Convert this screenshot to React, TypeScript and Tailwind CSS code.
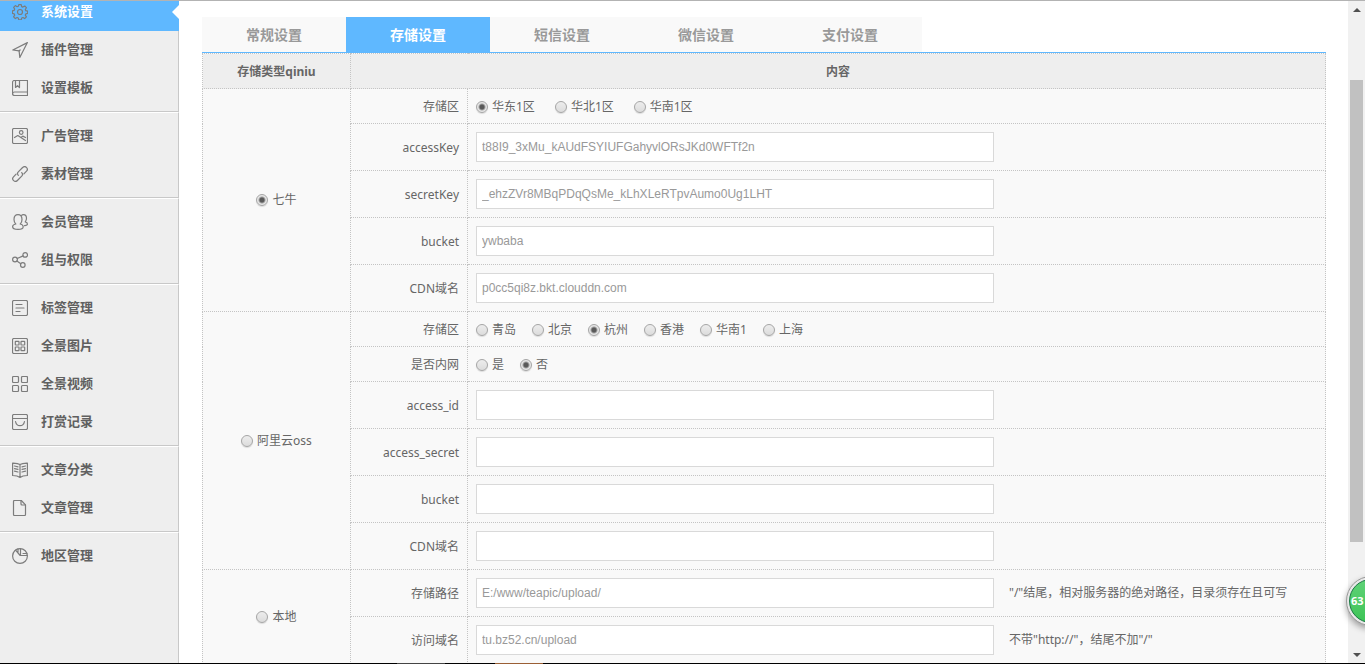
import type { ReactNode } from "react";
import clsx from "clsx";

type IconProps = { children: ReactNode };

function Icon({ children }: IconProps) {
  return (
    <svg
      viewBox="0 0 16 16"
      className="h-4 w-4 shrink-0"
      fill="none"
      stroke="#7c7c7c"
      strokeWidth="1.2"
      strokeLinejoin="round"
      strokeLinecap="round"
      aria-hidden="true"
    >
      {children}
    </svg>
  );
}

const icons = {
  gear: (
    <Icon>
      <path d="M6.8.6h2.4l.5 2 1.200.5 1.800-1.100 1.700 1.700-1.100 1.800.5 1.200 1.900.5v2.200l-1.900.5-.5 1.200 1.100 1.800-1.700 1.700-1.800-1.100-1.200.5-.5 1.800H6.800l-.5-1.800-1.200-.5-1.800 1.100-1.700-1.700 1.100-1.800-.5-1.200-1.800-.5V6.800l1.800-.5.5-1.200-1.100-1.800 1.700-1.700 1.800 1.100 1.200-.5z" />
      <circle cx="8" cy="8" r="2.500" />
    </Icon>
  ),
  plane: (
    <Icon>
      <path d="M15.400.6.8 8l6.300.9.7 6.500z" />
      <path d="m7.100 8.900 1-.9" />
    </Icon>
  ),
  book: (
    <Icon>
      <path d="M15.500.5H2.500c-1.200 0-2 .8-2 2v11c0 1.200.8 2 2 2h13z" />
      <path d="M.6 13.500c.1-1 .9-1.500 1.900-1.500h13M3.500.7v6.800l2-1.800 2 1.800V.7" />
    </Icon>
  ),
  image: (
    <Icon>
      <rect x=".5" y=".5" width="15" height="15" rx="1.500" />
      <circle cx="9.200" cy="4.500" r="1.800" />
      <path d="m2.500 9.500 3.300-2 7.700 5M9.300 9.300l1.500-1.200 2.700 1.400" />
    </Icon>
  ),
  link: (
    <Icon>
      <path d="M6.300 9.300c-1-1-1-2.400 0-3.400l4.300-4.400c1.100-1.100 2.700-1.100 3.800-.1 1.200 1.100 1.100 2.700.1 3.800l-2.600 2.700" />
      <path d="M9.700 6.700c1 1 1 2.400 0 3.400l-4.300 4.400c-1.100 1.100-2.700 1.100-3.800.1-1.200-1.100-1.100-2.700-.1-3.800l2.600-2.700" />
    </Icon>
  ),
  users: (
    <Icon>
      <path d="M3.800 10C2.600 9 2 7.500 2 5.500 2 2.500 3.600.6 6 .6s4 1.900 4 4.900c0 2-.6 3.500-1.800 4.500 1.800.4 3 1.200 3 2.700 0 1.900-2.200 2.700-5.200 2.700S.6 14.600.6 12.700C.6 11.200 2 10.300 3.800 10z" />
      <path d="M9.500 1.300c.5-.5 1.200-.7 1.900-.7 1.900 0 3.100 1.500 3.100 3.700 0 1.500-.5 2.700-1.300 3.500 1.400.3 2.200 1 2.200 2.200 0 1-.9 1.500-2.900 1.600" />
    </Icon>
  ),
  share: (
    <Icon>
      <circle cx="3" cy="7.500" r="2.400" />
      <circle cx="13.200" cy="2.900" r="2.300" />
      <circle cx="10.800" cy="13" r="2.300" />
      <path d="m5.200 6.500 5.900-2.600M4.900 9l3.900 2.700" />
    </Icon>
  ),
  note: (
    <Icon>
      <rect x=".5" y=".5" width="15" height="15" rx="1.500" />
      <path d="M4 4.500h6M4 8h8M4 11.500h4" />
    </Icon>
  ),
  gridBox: (
    <Icon>
      <rect x=".5" y=".5" width="15" height="15" rx="1.500" />
      <rect x="3.300" y="3.300" width="3.700" height="3.700" rx=".5" />
      <rect x="9" y="3.300" width="3.700" height="3.700" rx=".5" />
      <rect x="3.300" y="9" width="3.700" height="3.700" rx=".5" />
      <rect x="9" y="9" width="3.700" height="3.700" rx=".5" />
    </Icon>
  ),
  grid: (
    <Icon>
      <rect x=".5" y=".5" width="6" height="6" rx="1" />
      <rect x="9.500" y=".5" width="6" height="6" rx="1" />
      <rect x=".5" y="9.500" width="6" height="6" rx="1" />
      <rect x="9.500" y="9.500" width="6" height="6" rx="1" />
    </Icon>
  ),
  pocket: (
    <Icon>
      <rect x=".5" y=".5" width="15" height="15" rx="1.500" />
      <path d="M.5 4.500h15M3.500 7.500c.5 2.700 2.200 4.200 4.500 4.200s4-1.500 4.500-4.200" />
    </Icon>
  ),
  openBook: (
    <Icon>
      <path d="M8 2.500C6 1.300 3.500 1.200.6 1v12.500c3 .1 5.400.4 7.400 1.900 2-1.500 4.400-1.800 7.400-1.900V1c-2.900.2-5.400.3-7.400 1.500zM8 2.500v12.900" />
      <path d="m2.500 4 3.500.8M2.500 6.600l3.500.8M2.500 9.200l3.500.8M13.500 4l-3.500.8M13.500 6.600l-3.500.8M13.500 9.200l-3.500.8" />
    </Icon>
  ),
  file: (
    <Icon>
      <path d="M9.300.5H2.500c-.6 0-1 .4-1 1v13c0 .6.4 1 1 1h10c.6 0 1-.4 1-1V4.900z" />
      <path d="M9 .7V4c0 .7.300 1 1 1h3.300" />
    </Icon>
  ),
  pie: (
    <Icon>
      <circle cx="8" cy="8" r="7.400" />
      <path d="M15.300 7.500H8.200L3.500 2.200M6 .9v4M8.500.6v6.700M11 5.500h3.900" />
    </Icon>
  ),
};

type IconName = keyof typeof icons;

const menuGroups: { label: string; icon: IconName; active?: boolean }[][] = [
  [
    { label: "系统设置", icon: "gear", active: true },
    { label: "插件管理", icon: "plane" },
    { label: "设置模板", icon: "book" },
  ],
  [
    { label: "广告管理", icon: "image" },
    { label: "素材管理", icon: "link" },
  ],
  [
    { label: "会员管理", icon: "users" },
    { label: "组与权限", icon: "share" },
  ],
  [
    { label: "标签管理", icon: "note" },
    { label: "全景图片", icon: "gridBox" },
    { label: "全景视频", icon: "grid" },
    { label: "打赏记录", icon: "pocket" },
  ],
  [
    { label: "文章分类", icon: "openBook" },
    { label: "文章管理", icon: "file" },
  ],
  [{ label: "地区管理", icon: "pie" }],
];

const tabs = ["常规设置", "存储设置", "短信设置", "微信设置", "支付设置"];

type Field = {
  label: string;
  name: string;
  value?: string;
  hint?: string;
  options?: string[];
  checked?: string;
};

const storages: { id: string; label: string; fields: Field[] }[] = [
  {
    id: "qiniu",
    label: "七牛",
    fields: [
      { label: "存储区", name: "zone", options: ["华东1区", "华北1区", "华南1区"], checked: "华东1区" },
      { label: "accessKey", name: "accessKey", value: "t88I9_3xMu_kAUdFSYIUFGahyvlORsJKd0WFTf2n" },
      { label: "secretKey", name: "secretKey", value: "_ehzZVr8MBqPDqQsMe_kLhXLeRTpvAumo0Ug1LHT" },
      { label: "bucket", name: "bucket", value: "ywbaba" },
      { label: "CDN域名", name: "cdn", value: "p0cc5qi8z.bkt.clouddn.com" },
    ],
  },
  {
    id: "oss",
    label: "阿里云oss",
    fields: [
      { label: "存储区", name: "zone", options: ["青岛", "北京", "杭州", "香港", "华南1", "上海"], checked: "杭州" },
      { label: "是否内网", name: "internal", options: ["是", "否"], checked: "否" },
      { label: "access_id", name: "access_id", value: "" },
      { label: "access_secret", name: "access_secret", value: "" },
      { label: "bucket", name: "bucket", value: "" },
      { label: "CDN域名", name: "cdn", value: "" },
    ],
  },
  {
    id: "local",
    label: "本地",
    fields: [
      {
        label: "存储路径",
        name: "path",
        value: "E:/www/teapic/upload/",
        hint: "\"/\"结尾，相对服务器的绝对路径，目录须存在且可写",
      },
      { label: "访问域名", name: "domain", value: "tu.bz52.cn/upload", hint: "不带\"http://\"，结尾不加\"/\"" },
    ],
  },
];

function Radio({ label, name, checked }: { label: string; name: string; checked?: boolean }) {
  return (
    <label className="inline-flex items-center gap-1 whitespace-nowrap">
      <input
        type="radio"
        name={name}
        defaultChecked={checked}
        className="h-3 w-3 shrink-0 appearance-none rounded-full border border-[#a6a6a6] bg-linear-to-b from-[#ededed] to-[#dcdcdc] shadow-[0_1px_1px_rgba(0,0,0,0.12)] checked:bg-[radial-gradient(circle,#5a5a5a_0,#5a5a5a_2px,#e6e6e6_4px)]"
      />
      {label}
    </label>
  );
}

function FieldControl({ field, id }: { field: Field; id: string }) {
  if (field.options) {
    return (
      <div
        role="radiogroup"
        aria-label={field.label}
        className={clsx("flex pt-0.5", field.options.length === 3 ? "gap-5" : "gap-4")}
      >
        {field.options.map((o) => (
          <Radio key={o} label={o} name={id} checked={o === field.checked} />
        ))}
      </div>
    );
  }
  return (
    <div className="flex items-center gap-[15px]">
      <input
        id={id}
        type="text"
        defaultValue={field.value}
        className="h-[30px] w-[518px] border border-[#d9d9d9] bg-white px-[5px] font-['Liberation_Sans',Arial,sans-serif] text-xs text-[#999] outline-none"
      />
      {field.hint && <span>{field.hint}</span>}
    </div>
  );
}

function Sidebar() {
  return (
    <nav className="-mt-2 flex w-[179px] shrink-0 flex-col bg-[#eee]">
      {menuGroups.map((group, i) => (
        <ul
          key={i}
          className={clsx(
            "border-r border-[#c8c8c8] pb-1",
            i > 0 && "border-t border-t-white pt-1",
            i < menuGroups.length - 1 ? "border-b" : "flex-1",
          )}
        >
          {group.map((item) => (
            <li key={item.label} className={clsx("relative", item.active && "-mr-px bg-[#5fb8ff]")}>
              <a
                href="#"
                className={clsx(
                  "flex h-[38px] items-center gap-[13px] pl-3 text-[13px] font-bold",
                  item.active ? "text-white" : "text-[#606060]",
                )}
              >
                {icons[item.icon]}
                {item.label}
              </a>
              {item.active && (
                <span className="absolute top-3 right-0 border-y-[7px] border-r-[7px] border-y-transparent border-r-white" />
              )}
            </li>
          ))}
        </ul>
      ))}
    </nav>
  );
}

function StorageTable() {
  const cell = "border border-dotted border-[#c4c4c4]";
  return (
    <table className="w-full table-fixed border-collapse bg-[#f9f9f9]">
      <colgroup>
        <col className="w-[148px]" />
        <col className="w-[117px]" />
        <col />
      </colgroup>
      <thead>
        <tr className="h-[35px] bg-[#eee]">
          <th className={clsx(cell, "pt-0.5")}>存储类型qiniu</th>
          <th className={clsx(cell, "pt-0.5")} colSpan={2}>
            内容
          </th>
        </tr>
      </thead>
      <tbody>
        {storages.map((storage) =>
          storage.fields.map((field, i) => {
            const id = `${storage.id}-${field.name}`;
            return (
              <tr key={id} className={field.options ? "h-[35px]" : "h-[47px]"}>
                {i === 0 && (
                  <td rowSpan={storage.fields.length} className={clsx(cell, "pt-0.5 text-center")}>
                    <Radio label={storage.label} name="storage" checked={storage.id === "qiniu"} />
                  </td>
                )}
                <td className={clsx(cell, "pt-0.5 pr-2 text-right")}>
                  {field.options ? field.label : <label htmlFor={id}>{field.label}</label>}
                </td>
                <td className={clsx(cell, "pl-2")}>
                  <FieldControl field={field} id={id} />
                </td>
              </tr>
            );
          }),
        )}
      </tbody>
    </table>
  );
}

function Scrollbar() {
  return (
    <div className="flex w-[17px] shrink-0 flex-col items-center bg-[#f1f1f1]">
      <span className="flex h-[17px] items-center">
        <span className="border-x-4 border-b-4 border-x-transparent border-b-[#505050]" />
      </span>
      <span className="grow-62" />
      <span className="w-[13px] grow-462 bg-[#c1c1c1]" />
      <span className="grow-104" />
      <span className="flex h-[17px] items-center">
        <span className="border-x-4 border-t-4 border-x-transparent border-t-[#505050]" />
      </span>
    </div>
  );
}

export default function App() {
  return (
    <div className="relative flex h-screen flex-col overflow-hidden border-t border-t-[#b3b3b3] bg-white font-['Noto_Sans','Noto_Sans_CJK_SC',sans-serif] text-xs text-[#666]">
      <div className="flex min-h-0 flex-1 overflow-hidden">
        <Sidebar />
        <main className="min-w-0 flex-1 overflow-hidden pt-4 pr-[22px] pl-[23px]">
          <div role="tablist" className="flex border-b border-[#5fb8ff]">
            {tabs.map((tab) => (
              <button
                key={tab}
                type="button"
                role="tab"
                aria-selected={tab === "存储设置"}
                className={clsx(
                  "h-[35px] w-36 text-sm font-bold",
                  tab === "存储设置" ? "bg-[#5fb8ff] text-white" : "bg-[#f9f9f9] text-[#999]",
                )}
              >
                {tab}
              </button>
            ))}
          </div>
          <StorageTable />
        </main>
        <Scrollbar />
      </div>

      {/* top edge of the taskbar */}
      <div className="flex h-px shrink-0 gap-[50px] bg-black pl-[397px]">
        <span className="w-12 bg-[#444]" />
        <span className="w-12 bg-[#9a5f35]" />
      </div>

      {/* floating accelerator ball, half outside the window */}
      <div className="absolute -right-[31px] bottom-[38px] flex h-[50px] w-[50px] items-center rounded-full border border-[#9a9a9a] bg-[#e8e8e8] p-[2px] shadow-[0_3px_6px_rgba(0,0,0,0.35)]">
        <div className="flex h-full w-full items-center rounded-full border border-[#1c7a45] bg-linear-to-b from-[#5fd277] to-[#3cc456] pl-px text-[11px] font-bold text-white">
          63
        </div>
      </div>
    </div>
  );
}
